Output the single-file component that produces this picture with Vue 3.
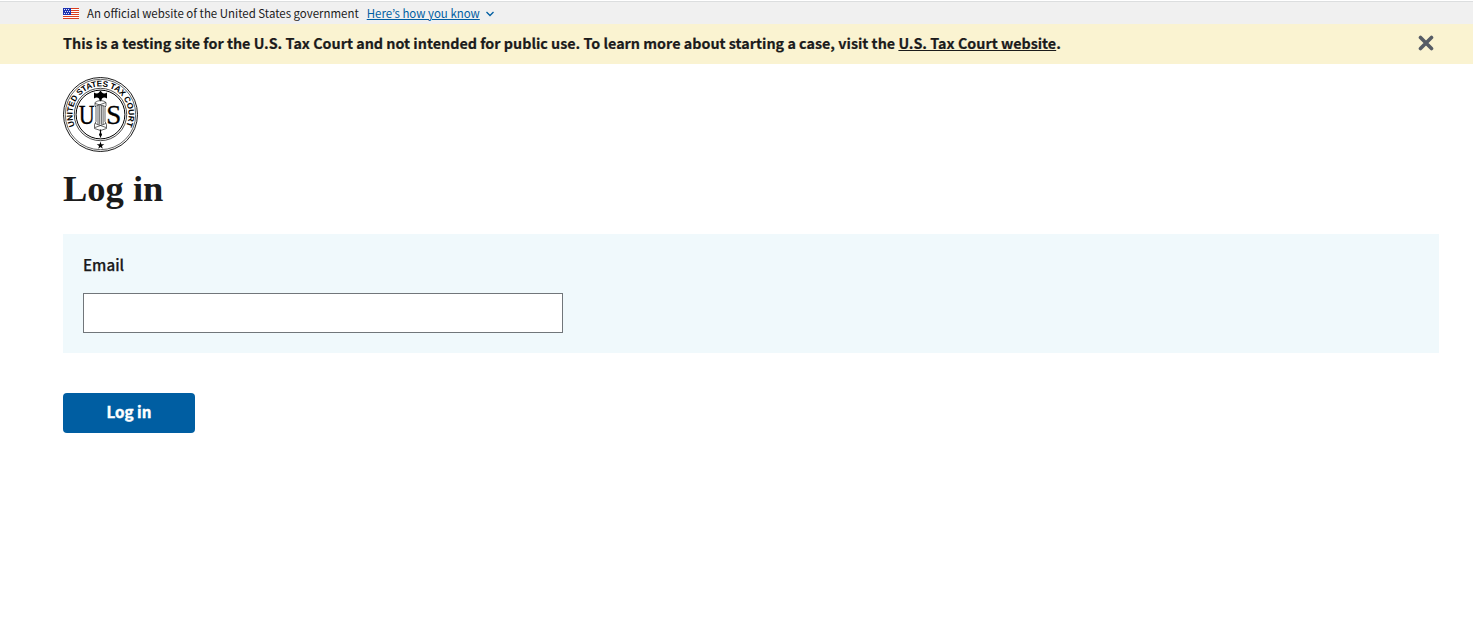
<script setup>
import { ref } from 'vue'

const email = ref('')
const stars = [
  [1.5, 1.5], [3.5, 1.5], [5.5, 1.5], [2.5, 3.5], [4.5, 3.5], [6.5, 3.5], [1.5, 5.5], [3.5, 5.5], [5.5, 5.5],
]
</script>

<template>
  <div class="page">
    <header class="gov">
      <svg class="flag" width="16" height="11" viewBox="0 0 16 11" shape-rendering="crispEdges">
        <rect width="16" height="11" fill="#fff" />
        <rect v-for="n in 6" :key="n" y="0" width="16" height="1" :transform="`translate(0 ${(n - 1) * 2})`" fill="#db3e1f" />
        <rect width="8" height="7" fill="#1e33b1" />
        <rect v-for="(s, i) in stars" :key="'s' + i" :x="s[0] - 0.5" :y="s[1] - 0.5" width="1" height="1" fill="#dfe3fa" />
      </svg>
      <span class="gov-text">An official website of the United States government</span>
      <a class="gov-link">Here’s how you know</a>
      <svg class="chevron" width="8" height="6" viewBox="0 0 8 6">
        <path d="M0.5 1 L4 4.5 L7.5 1" fill="none" stroke="#005ea2" stroke-width="1.3" />
      </svg>
    </header>

    <section class="notice">
      <p class="notice-text">This is a testing site for the U.S. Tax Court and not intended for public use. To learn more about starting a case, visit the <a>U.S. Tax Court website</a>.</p>
      <button class="close" aria-label="Close">
        <svg width="16" height="16" viewBox="0 0 16 16">
          <path d="M2.5 2.5 L13.5 13.5 M13.5 2.5 L2.5 13.5" stroke="#565c65" stroke-width="3.6" stroke-linecap="round" />
        </svg>
      </button>
    </section>

    <main class="main">
      <svg class="seal" width="75" height="75" viewBox="0.5 0.5 75 75">
        <defs><path id="ring" d="M18.2 57.8 A28 28 0 1 1 57.8 57.8" /></defs>
        <g fill="none" stroke="#000">
          <circle cx="38" cy="38" r="37" stroke-width="0.9" />
          <circle cx="38" cy="38" r="35.2" stroke-width="0.6" />
          <circle cx="38" cy="38" r="26.2" stroke-width="0.7" />
          <circle cx="38" cy="38" r="24.4" stroke-width="1" />
        </g>
        <text class="ring-text"><textPath href="#ring" startOffset="50%" text-anchor="middle" textLength="111">UNITED STATES TAX COURT</textPath></text>
        <text class="letter" x="16.2" y="47.3" textLength="16" lengthAdjust="spacingAndGlyphs">U</text>
        <text class="letter" x="43.8" y="47.3" textLength="15" lengthAdjust="spacingAndGlyphs">S</text>
        <path d="M31.5 16 q3 2 5 0 l1.5 -2 l1.5 2 q2 2 5 0 v6 q-3 -2 -5 0 l-1 3 h-1 l-1 -3 q-2 -2 -5 0z" />
        <rect x="32" y="25" width="12" height="28" fill="#fff" />
        <g fill="none" stroke="#222" stroke-width="0.7">
          <path d="M32.5 26 Q38 22 43.5 26 V29 L42.5 31 V45 L44 48 V52 L38 54 L32 52 V48 L33.5 45 V31 L32.5 29z" />
          <path d="M35.5 29 V48 M37.2 29 V48 M38.9 29 V48 M40.6 29 V48" />
          <path d="M32.5 30 L43.5 26 M32.5 27 L43 30 M32.5 47 L43.5 51 M32.5 51 L43.5 47" />
        </g>
        <path d="M38 53 V61" stroke="#000" stroke-width="1.2" />
        <circle cx="38" cy="58" r="1.5" />
        <path d="M38 65 L38.9 67.8 H41.8 L39.4 69.5 L40.3 72.2 L38 70.5 L35.7 72.2 L36.6 69.5 L34.2 67.8 H37.1z" />
      </svg>
      <h1 class="title">Log in</h1>
      <form class="form" @submit.prevent>
        <div class="panel">
          <label class="label" for="email">Email</label>
          <input id="email" v-model="email" class="input" type="email" />
        </div>
        <button class="submit" type="submit">Log in</button>
      </form>
    </main>
  </div>
</template>

<style>
body { margin: 0; background: #fff; }
</style>

<style scoped>
.page { font-family: "Noto Sans CJK KR", "Noto Sans", sans-serif; color: #1b1b1b; padding-top: 1px; }
.gov { box-sizing: border-box; height: 23px; padding-left: 63px; display: flex; align-items: center; background: #f0f0f0; border-top: 1px solid #dcdedf; font-size: 11.46px; line-height: 22px; white-space: nowrap; }
.gov-text { margin-left: 8px; }
.gov-link { margin-left: 8px; color: #005ea2; text-decoration: underline; }
.chevron { margin: 2px 0 0 6px; }
.notice { height: 40px; padding: 0 39.5px 0 63px; display: flex; align-items: center; justify-content: space-between; background: #faf3d1; }
.notice-text { margin: 0 0 2px; font-size: 14.33px; font-weight: 700; line-height: 24px; white-space: nowrap; -webkit-text-stroke: 0.2px #1b1b1b; }
.notice-text a { text-decoration: underline; }
.close { display: flex; padding: 0; border: 0; background: none; margin-bottom: 3px; }
.main { padding: 13px 34px 0 63px; }
.seal { display: block; }
.ring-text { font: 700 8.2px "Liberation Sans", Arial, sans-serif; }
.letter { font: 400 27px "Liberation Serif", serif; stroke: #000; stroke-width: 0.3px; }
.title { margin: 14px 0 0; height: 48px; line-height: 46px; font-family: "Liberation Serif", serif; font-weight: 700; font-size: 36.5px; }
.panel { box-sizing: border-box; margin-top: 20px; height: 119px; padding: 19px 20px 20px; background: #f0f9fc; display: flex; flex-direction: column; align-items: flex-start; }
.label { font-size: 15.2px; font-weight: 500; line-height: 23px; -webkit-text-stroke: 0.25px #1b1b1b; }
.input { box-sizing: border-box; width: 480px; height: 40px; margin: 17px 0 0; padding: 8px; border: 1px solid #71767a; border-radius: 0; background: #fff; font: inherit; }
.submit { display: block; width: 132px; height: 40px; margin-top: 40px; padding: 0 0 3px; border: 0; border-radius: 4px; background: #005ea2; color: #fff; font-family: inherit; font-size: 15.2px; font-weight: 700; line-height: 37px; -webkit-text-stroke: 0.4px #fff; }
</style>
